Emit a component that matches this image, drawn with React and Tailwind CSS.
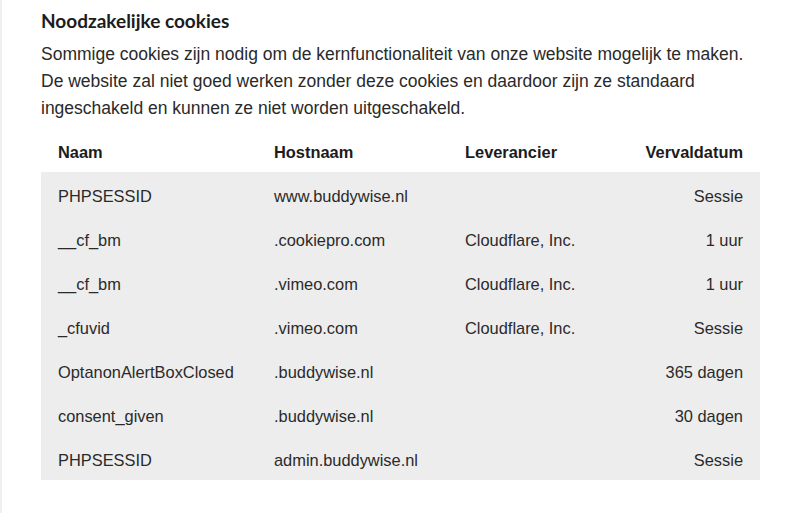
const ROWS = [
  ["PHPSESSID", "www.buddywise.nl", "", "Sessie"],
  ["__cf_bm", ".cookiepro.com", "Cloudflare, Inc.", "1 uur"],
  ["__cf_bm", ".vimeo.com", "Cloudflare, Inc.", "1 uur"],
  ["_cfuvid", ".vimeo.com", "Cloudflare, Inc.", "Sessie"],
  ["OptanonAlertBoxClosed", ".buddywise.nl", "", "365 dagen"],
  ["consent_given", ".buddywise.nl", "", "30 dagen"],
  ["PHPSESSID", "admin.buddywise.nl", "", "Sessie"],
];

export default function App() {
  return (
    <div className="w-[800px] h-[513px] bg-white border-l-2 border-[#f0f0f0] text-[#222] font-['Liberation_Sans',Arial,sans-serif] overflow-hidden">
      <div className="pl-[39px] pr-[20px] pt-[8px]">
        <h2 className="text-[19px] font-bold leading-[26px] font-['Lato',sans-serif] text-[#1c1c1c]">
          Noodzakelijke cookies
        </h2>
        <p className="mt-[7px] text-[17.5px] leading-[27px] text-[#2a2a2a] whitespace-nowrap">
          Sommige cookies zijn nodig om de kernfunctionaliteit van onze website mogelijk te maken.
          <br />
          De website zal niet goed werken zonder deze cookies en daardoor zijn ze standaard
          <br />
          ingeschakeld en kunnen ze niet worden uitgeschakeld.
        </p>

        <table className="mt-[10px] w-[719px] border-collapse text-[16.4px] text-[#2a2a2a]">
          <thead>
            <tr className="h-[40px] text-left">
              <th className="pl-[17px] w-[233px] font-bold text-[#1c1c1c]">Naam</th>
              <th className="w-[191px] font-bold text-[#1c1c1c]">Hostnaam</th>
              <th className="font-bold text-[#1c1c1c]">Leverancier</th>
              <th className="pr-[17px] text-right font-bold text-[#1c1c1c]">Vervaldatum</th>
            </tr>
          </thead>
          <tbody className="bg-[#ededed]">
            {ROWS.map((r, i) => (
              <tr key={i} className="h-[44px]">
                <td className="pl-[17px] pt-[5px]">{r[0]}</td>
                <td className="pt-[5px]">{r[1]}</td>
                <td className="pt-[5px]">{r[2]}</td>
                <td className="pr-[17px] pt-[5px] text-right">{r[3]}</td>
              </tr>
            ))}
          </tbody>
        </table>
      </div>
    </div>
  );
}
